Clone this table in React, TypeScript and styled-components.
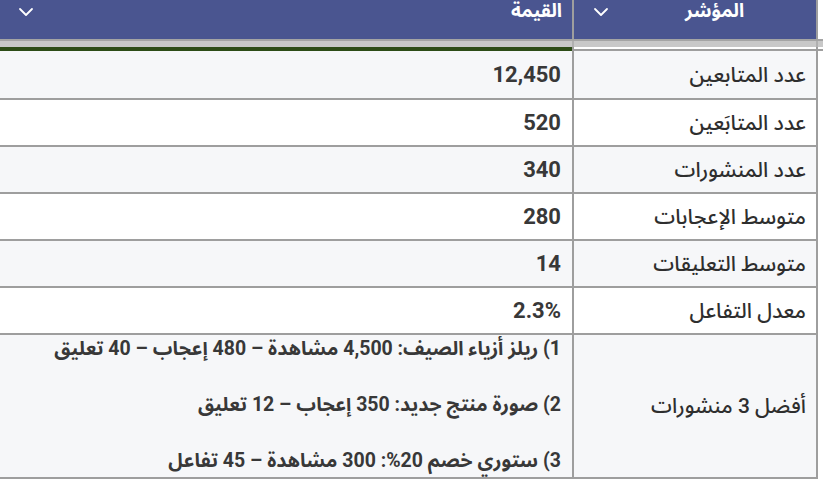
import React from "react";
import styled, { createGlobalStyle } from "styled-components";
import { ChevronDown } from "lucide-react";

const GlobalStyle = createGlobalStyle`
  html, body { margin: 0; padding: 0; background: #ffffff; }
  body { font-family: Roboto, "Noto Sans Arabic", "DejaVu Sans", sans-serif; color: #333333; }
  * { box-sizing: border-box; }
`;

const LINE = "#9e9e9e";

const Page = styled.div`
  width: 823px;
  height: 479px;
  overflow: hidden;
  background: #ffffff;
  display: flex;
  flex-direction: column;
  direction: rtl;
  & > * { flex: none; }
`;

const HeaderRow = styled.div`
  display: flex;
  width: 818px;
  height: 39px;
  margin-right: auto;
  background: #4a5590;
  color: #ffffff;
`;

const HeadCell = styled.div<{ $label?: boolean }>`
  display: flex;
  align-items: flex-start;
  ${(p) =>
    p.$label
      ? `width: 246px; flex: none; border-left: 2px solid ${LINE}; border-right: 2px solid ${LINE}; padding-left: 15px;`
      : `flex: 1; padding-left: 14px; padding-right: 10px;`}
`;

const HeadText = styled.div<{ $center?: boolean }>`
  flex: 1;
  font-size: 19px;
  font-weight: 700;
  line-height: 20px;
  padding-top: 1px;
  text-align: ${(p) => (p.$center ? "center" : "right")};
`;

const Chevron = styled(ChevronDown)`
  flex: none;
  color: #ffffff;
`;

const BandRow = styled.div`
  display: flex;
  height: 8px;
  background: #c8c8c8;
  border-top: 2px solid #a4a4a4;
`;

const Filler = styled.div`
  width: 5px;
  flex: none;
`;

const BandCell = styled.div<{ $label?: boolean }>`
  ${(p) =>
    p.$label
      ? `width: 246px; flex: none; border-left: 2px solid #b0b0b0; border-right: 2px solid #b0b0b0;`
      : `flex: 1;`}
`;

const AccentRow = styled.div`
  display: flex;
  height: 4px;
`;

const AccentFill = styled.div`
  width: 5px;
  flex: none;
  background: #ffffff;
  border-bottom: 2px solid ${LINE};
`;

const AccentLabel = styled.div`
  width: 246px;
  flex: none;
  background: #ffffff;
  border-left: 2px solid ${LINE};
  border-right: 2px solid ${LINE};
  border-bottom: 2px solid ${LINE};
`;

const AccentValue = styled.div`
  flex: 1;
  background: #2d4c17;
`;

const Row = styled.div<{ $alt?: boolean; $h?: number }>`
  display: flex;
  width: 818px;
  margin-right: auto;
  min-height: ${(p) => (p.$h ? `${p.$h}px` : "auto")};
  background: ${(p) => (p.$alt ? "#f6f7f9" : "#ffffff")};
  border-bottom: 2px solid ${LINE};
`;

const LabelCell = styled.div`
  width: 246px;
  flex: none;
  display: flex;
  align-items: center;
  padding-right: 10px;
  border-left: 2px solid ${LINE};
  border-right: 2px solid ${LINE};
  font-size: 21px;
  font-weight: 500;
  color: #2e2e2e;
`;

const ValueCell = styled.div`
  flex: 1;
  display: flex;
  align-items: center;
  padding-right: 11px;
  font-size: 22px;
  font-weight: 700;
  color: #383838;
`;

const Posts = styled.div`
  font-size: 19.5px;
  line-height: 28px;
  padding: 0 0 2px;
`;

const rows: { label: string; value: string }[] = [
  { label: "عدد المتابعين", value: "12,450" },
  { label: "عدد المتابَعين", value: "520" },
  { label: "عدد المنشورات", value: "340" },
  { label: "متوسط الإعجابات", value: "280" },
  { label: "متوسط التعليقات", value: "14" },
  { label: "معدل التفاعل", value: "2.3%" },
];

export default function App() {
  return (
    <>
      <GlobalStyle />
      <Page>
        <HeaderRow>
          <HeadCell $label>
            <HeadText $center>المؤشر</HeadText>
            <Chevron size={24} strokeWidth={1.8} />
          </HeadCell>
          <HeadCell>
            <HeadText>القيمة</HeadText>
            <Chevron size={24} strokeWidth={1.8} />
          </HeadCell>
        </HeaderRow>
        <BandRow>
          <Filler />
          <BandCell $label />
          <BandCell />
        </BandRow>
        <AccentRow>
          <AccentFill />
          <AccentLabel />
          <AccentValue />
        </AccentRow>
        {rows.map((r, i) => (
          <Row key={r.label} $alt={i % 2 === 0} $h={i === 0 ? 49 : 47}>
            <LabelCell>{r.label}</LabelCell>
            <ValueCell>{r.value}</ValueCell>
          </Row>
        ))}
        <Row $alt>
          <LabelCell>أفضل 3 منشورات</LabelCell>
          <ValueCell>
            <Posts>
              1) ريلز أزياء الصيف: 4,500 مشاهدة – 480 إعجاب – 40 تعليق
              <br />
              <br />
              2) صورة منتج جديد: 350 إعجاب – 12 تعليق
              <br />
              <br />
              3) ستوري خصم 20%: 300 مشاهدة – 45 تفاعل
            </Posts>
          </ValueCell>
        </Row>
      </Page>
    </>
  );
}
